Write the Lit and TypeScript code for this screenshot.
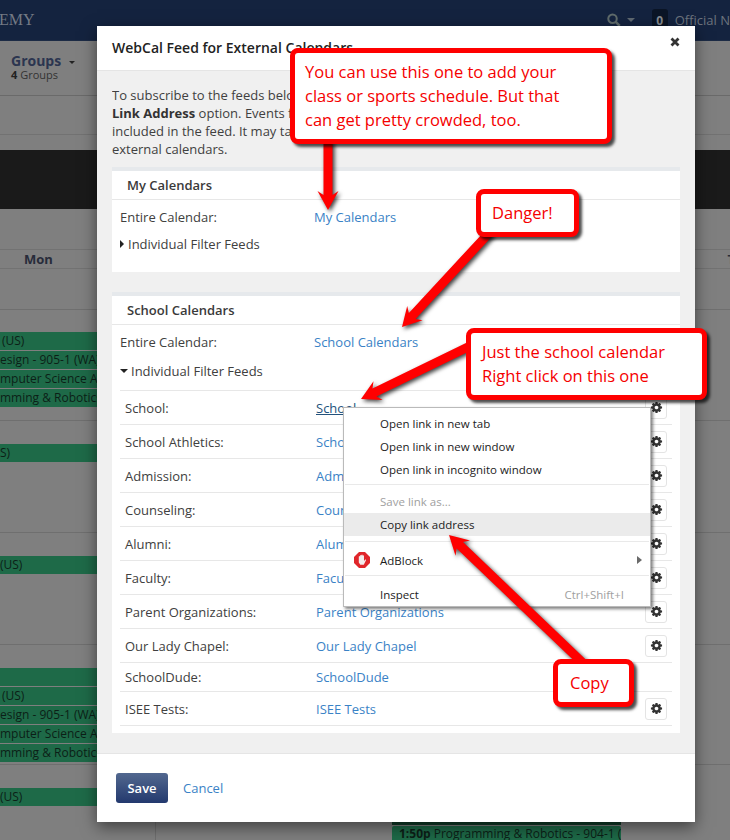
import { LitElement, html, css, svg } from "lit";
import { customElement } from "lit/decorators.js";

const COG = "M1152 896q0-106-75-181t-181-75-181 75-75 181 75 181 181 75 181-75 75-181zm512-109v222q0 12-8 23t-20 13l-185 28q-19 54-39 91 35 50 107 138 10 12 10 25t-9 23q-27 37-99 108t-94 71q-12 0-26-9l-138-108q-44 23-91 38-16 136-29 186-7 28-36 28h-222q-14 0-24.500-8.500t-11.500-21.500l-28-184q-49-16-90-37l-141 107q-10 9-25 9-14 0-25-11-126-114-165-168-7-10-7-23 0-12 8-23 15-21 51-66.500t54-70.500q-27-50-41-99l-183-27q-13-2-21-12.500t-8-23.500v-222q0-12 8-23t19-13l186-28q14-46 39-92-40-57-107-138-10-12-10-24 0-10 9-23 26-36 98.500-107.500t94.500-71.500q13 0 26 10l138 107q44-23 91-38 16-136 29-186 7-28 36-28h222q14 0 24.500 8.500t11.500 21.500l28 184q49 16 90 37l142-107q9-9 24-9 13 0 25 10 129 119 165 170 7 8 7 22 0 12-8 23-15 21-51 66.500t-54 70.500q26 50 41 98l183 28q13 2 21 12.500t8 23.500z";

type Row = { label: string; link: string; gear: boolean; short?: boolean; active?: boolean };
const rows: Row[] = [
  { label: "School:", link: "School", gear: true, active: true },
  { label: "School Athletics:", link: "School Athletics", gear: true },
  { label: "Admission:", link: "Admission", gear: true },
  { label: "Counseling:", link: "Counseling", gear: true },
  { label: "Alumni:", link: "Alumni", gear: true },
  { label: "Faculty:", link: "Faculty", gear: true },
  { label: "Parent Organizations:", link: "Parent Organizations", gear: true },
  { label: "Our Lady Chapel:", link: "Our Lady Chapel", gear: true },
  { label: "SchoolDude:", link: "SchoolDude", gear: false, short: true },
  { label: "ISEE Tests:", link: "ISEE Tests", gear: true },
];

// Backdrop rows: [gap above, kind, text]
type Bg = { gap: number; kind: "line" | "event"; text?: string; pad?: number };
const bgRows: Bg[] = [
  { gap: 40, kind: "line" },
  { gap: 22, kind: "event", text: "(US)", pad: 2 },
  { gap: 1, kind: "event", text: "esign - 905-1 (WA)", pad: 0 },
  { gap: 1, kind: "event", text: "mputer Science A -", pad: 0 },
  { gap: 1, kind: "event", text: "mming & Robotics -", pad: 0 },
  { gap: 13, kind: "line" },
  { gap: 23, kind: "event", text: "S)", pad: 0 },
  { gap: 70, kind: "line" },
  { gap: 23, kind: "event", text: "(US)", pad: 0 },
  { gap: 70, kind: "line" },
  { gap: 23, kind: "event", text: "", pad: 0 },
  { gap: 1, kind: "event", text: "(US)", pad: 2 },
  { gap: 1, kind: "event", text: "esign - 905-1 (WA)", pad: 0 },
  { gap: 1, kind: "event", text: "mputer Science A -", pad: 0 },
  { gap: 1, kind: "event", text: "mming & Robotics -", pad: 0 },
  { gap: 2, kind: "line" },
  { gap: 23, kind: "event", text: "(US)", pad: 0 },
];

function arrow(sx: number, sy: number, tx: number, ty: number, shaft = 9, head = 21, len = 19, notch = 4) {
  const dx = tx - sx, dy = ty - sy;
  const d = Math.hypot(dx, dy);
  const ux = dx / d, uy = dy / d, nx = -uy, ny = ux;
  const pt = (along: number, off: number) =>
    `${(tx - ux * along + nx * off).toFixed(1)},${(ty - uy * along + ny * off).toFixed(1)}`;
  return [
    pt(d, shaft / 2), pt(len - notch, shaft / 2), pt(len, head / 2), pt(0, 0),
    pt(len, -head / 2), pt(len - notch, -shaft / 2), pt(d, -shaft / 2),
  ].join(" ");
}

@customElement("app-root")
export class AppRoot extends LitElement {
  static styles = css`
    :host { display: block; }
    * { box-sizing: border-box; }
    .page {
      position: relative; width: 730px; height: 840px; overflow: hidden;
      background: #7f7f7f; font-family: "Open Sans", sans-serif; font-size: 13px; color: #404040;
    }
    .nav { height: 41px; background: #14233f; border-bottom: 1px solid #1c2b45; display: flex; align-items: center; }
    .logo { font-family: "Liberation Serif", serif; font-size: 16px; color: #737a84; margin-left: -1px; letter-spacing: 0; }
    .nav-right { margin-left: auto; display: flex; align-items: center; width: 123px; flex: none; }
    .caret-nav { width: 0; height: 0; border: 4px solid transparent; border-top-color: #5f6871; border-bottom: 0; margin-left: 6px; }
    .badge { margin-left: 17px; width: 19px; height: 22px; background: #0b1526; border-radius: 3px; color: #868b91; font-weight: 700; font-size: 12px; display: flex; align-items: center; justify-content: center; }
    .official { margin-left: 7px; color: #6c737d; font-size: 13px; white-space: nowrap; }
    .subbar { height: 55px; display: flex; flex-direction: column; padding: 12px 0 0 11px; border-bottom: 1px solid #6a6a6a; position: relative; }
    .groups { font-size: 14px; font-weight: 700; color: #2b3550; line-height: 16px; display: flex; align-items: center; gap: 8px; }
    .groups i { width: 0; height: 0; border: 3.5px solid transparent; border-top-color: #222; border-bottom: 0; margin-top: 2px; }
    .groups-sub { font-size: 11px; line-height: 11px; color: #333; }
    .groups-sub b { color: #222; }
    .bar2 { height: 39px; border-bottom: 1px solid #727272; }
    .band { margin-top: 15px; height: 59px; background: #1a1a1a; }
    .days { margin-top: 40px; height: 20px; border-top: 1px solid #727272; border-bottom: 1px solid #727272; position: relative; text-align: center; width: 730px; }
    .mon { position: absolute; left: 24px; top: 0; font-weight: 700; font-size: 13px; color: #272c3a; line-height: 18px; }
    .tue { position: absolute; right: -5px; top: 0; font-weight: 700; font-size: 13px; color: #272c3a; line-height: 18px; }
    .line { height: 1px; background: #6f6f6f; }
    .event { height: 18px; width: 97px; background: #1e6a48; color: #0c1f17; font-size: 12px; line-height: 17px; white-space: nowrap; overflow: hidden; }
    .late { position: absolute; left: 392px; top: 822px; width: 229px; height: 18px; display: flex; flex-direction: column; }
    .late i { display: block; height: 3px; background: #123d2a; }
    .late div { height: 15px; margin-top: 1px; background: #1e6a48; color: #0c1f17; font-size: 12px; line-height: 15px; padding-left: 7px; white-space: nowrap; overflow: hidden; border-radius: 2px 2px 0 0; }
    .vline { position: absolute; left: 155px; top: 780px; width: 1px; height: 60px; background: #6f6f6f; }
    .bg-col { display: flex; flex-direction: column; }

    .modal { position: absolute; left: 97px; top: 26px; width: 598px; height: 796px; background: #fff; box-shadow: 0 5px 15px rgba(0,0,0,.5); display: flex; flex-direction: column; }
    .head { height: 45px; flex: none; border-bottom: 1px solid #e5e5e5; padding: 0 15px; display: flex; align-items: center; justify-content: space-between; }
    .title { font-size: 14px; font-weight: 600; color: #222; white-space: nowrap; position: relative; top: -.5px; }
    .close { width: 10px; height: 10px; display: block; position: relative; top: -6px; margin-right: 0; }
    .body { flex: 1; background: #f0f0f0; padding: 15px 15px 0; }
    .intro { margin: 0 0 9px; line-height: 18px; white-space: nowrap; overflow: hidden; height: 72px; color: #404040; }
    .intro b { font-weight: 700; color: #333; }
    .section { background: #fff; border-top: 4px solid #e6e9ec; }
    .section + .section { margin-top: 20px; }
    .one { height: 105px; }
    .two { height: 441px; }
    .sec-head { height: 29px; border-bottom: 1px solid #e7e7e7; padding-left: 15px; font-weight: 600; line-height: 28px; color: #3a3a3a; }
    .entire { height: 32px; padding: 1px 8px 0; display: flex; align-items: center; }
    .entire span { width: 194px; flex: none; }
    a { color: #3a82c6; text-decoration: none; }
    .filter { height: 24px; padding-left: 8px; display: flex; align-items: center; gap: 4px; }
    .two .filter { gap: 3px; height: 32px; margin-top: 0; padding-bottom: 4px; }
    .feeds { margin: 1px 8px 0; border-top: 1px solid #e7e7e7; }
    .feed { height: 34px; border-bottom: 1px solid #e7e7e7; display: flex; align-items: center; padding: 0 5px; }
    .feed.short { height: 29px; }
    .feed > span { width: 191px; flex: none; }
    .feed > a { flex: 1; }
    a.active { color: #23527c; text-decoration: underline; }
    .gear { width: 22px; height: 22px; flex: none; border: 1px solid #e4e4e4; border-radius: 3px; background: #fff; display: flex; align-items: center; justify-content: center; padding: 0; margin-right: 0; }
    .gear svg { width: 13px; height: 13px; fill: #333; display: block; }
    .foot { height: 69px; flex: none; border-top: 1px solid #e5e5e5; padding: 19px 19px 0; display: flex; align-items: flex-start; gap: 15px; }
    .save { width: 52px; height: 30px; border: 0; border-radius: 3px; background: linear-gradient(#52688f, #23396e); color: #fff; font: 600 13px "Open Sans", sans-serif; padding: 0; }
    .cancel { line-height: 30px; }

    .menu { position: absolute; left: 343px; top: 407px; width: 308px; height: 200px; background: #fff; border: 1px solid #bababa; box-shadow: 2px 2px 3px rgba(0,0,0,.5); padding-top: 4px; font-size: 11.5px; color: #1c1c1c; }
    .mi { height: 23px; padding-left: 36px; padding-right: 26px; display: flex; align-items: center; justify-content: space-between; position: relative; }
    .mi.off, .mi small { color: #a0a0a0; }
    .mi small { font-size: 11.5px; }
    .mi.hot { background: #ebebeb; }
    .sep { height: 1px; background: #e9e9e9; margin: 3px 1px 5px; }
    .sep.wide { margin: 5px 1px 7px; }
    .sep.last { margin: 3px 1px 7px; }
    .ab { position: absolute; left: 10px; top: 3px; width: 16px; height: 16px; }
    .sub { position: absolute; right: 8px; top: 7px; width: 0; height: 0; border-left: 5px solid #6a6a6a; border-top: 4px solid transparent; border-bottom: 4px solid transparent; }

    .arrows { position: absolute; left: 0; top: 0; width: 730px; height: 840px; pointer-events: none; filter: drop-shadow(2px 2px 2px rgba(0,0,0,.75)); }
    .arrows polygon { fill: #ff0000; }
    .callout { position: absolute; background: #fff; border: 5px solid #ff0000; border-radius: 8px; box-shadow: 3px 3px 3px rgba(0,0,0,.7); color: #f50000; font-family: "Open Sans", sans-serif; font-size: 16.5px; line-height: 24px; white-space: nowrap; padding-left: 10px; display: flex; flex-direction: column; justify-content: center; }
    .c1 { left: 290px; top: 48px; width: 322px; height: 96px; }
    .c2 { left: 476px; top: 189px; width: 103px; height: 48px; padding-left: 11px; }
    .c3 { left: 466px; top: 328px; width: 241px; height: 72px; padding-left: 11px; }
    .c4 { left: 553px; top: 659px; width: 81px; height: 48px; padding-left: 12px; }
  `;

  render() {
    return html`
      <div class="page">
        <div class="nav">
          <span class="logo">EMY</span>
          <div class="nav-right">
            <svg width="16" height="16" viewBox="0 0 16 16"><circle cx="6.5" cy="6.5" r="5" fill="none" stroke="#5f6b6b" stroke-width="2.4"/><path d="M10 10l5 5" stroke="#5f6b6b" stroke-width="3"/></svg>
            <i class="caret-nav"></i>
            <span class="badge">0</span>
            <span class="official">Official N</span>
          </div>
        </div>
        <div class="subbar">
          <div class="groups">Groups <i></i></div>
          <div class="groups-sub"><b>4</b> Groups</div>
        </div>
        <div class="bar2"></div>
        <div class="band"></div>
        <div class="days"><span class="mon">Mon</span><span class="tue">T</span></div>
        <div class="bg-col">
          ${bgRows.map(r => html`
            <div style="height:${r.gap}px"></div>
            ${r.kind === "line"
              ? html`<div class="line"></div>`
              : html`<div class="event" style="padding-left:${r.pad}px">${r.text}</div>`}
          `)}
        </div>
        <div class="vline"></div>
        <div class="late"><i></i><div><b>1:50p</b> Programming &amp; Robotics - 904-1 (WD</div></div>

        <div class="modal">
          <div class="head">
            <div class="title">WebCal Feed for External Calendars</div>
            <svg class="close" viewBox="0 0 10 10"><path d="M1.500 1.500l7 7M8.500 1.500l-7 7" stroke="#333" stroke-width="2.800"/></svg>
          </div>
          <div class="body">
            <p class="intro">To subscribe to the feeds below, right click on the link and choose the <b>Copy</b><br>
            <b>Link Address</b> option. Events from the calendars you select here will be<br>
            included in the feed. It may take some time for them to be displayed in your<br>
            external calendars.</p>
            <div class="section one">
              <div class="sec-head">My Calendars</div>
              <div class="entire"><span>Entire Calendar:</span><a>My Calendars</a></div>
              <div class="filter"><svg width="4" height="8" viewBox="0 0 4 8"><path d="M0 0l4 4-4 4z" fill="#222"/></svg>Individual Filter Feeds</div>
            </div>
            <div class="section two">
              <div class="sec-head">School Calendars</div>
              <div class="entire"><span>Entire Calendar:</span><a>School Calendars</a></div>
              <div class="filter"><svg width="8" height="4" viewBox="0 0 8 4"><path d="M0 0h8l-4 4z" fill="#222"/></svg>Individual Filter Feeds</div>
              <div class="feeds">
                ${rows.map(r => html`
                  <div class="feed ${r.short ? "short" : ""}">
                    <span>${r.label}</span>
                    <a class="${r.active ? "active" : ""}">${r.link}</a>
                    ${r.gear ? html`<button class="gear"><svg viewBox="0 0 1792 1792"><path d="${COG}"/></svg></button>` : ""}
                  </div>`)}
              </div>
            </div>
          </div>
          <div class="foot">
            <button class="save">Save</button>
            <a class="cancel">Cancel</a>
          </div>
        </div>

        <div class="menu">
          <div class="mi">Open link in new tab</div>
          <div class="mi">Open link in new window</div>
          <div class="mi">Open link in incognito window</div>
          <div class="sep"></div>
          <div class="mi off">Save link as...</div>
          <div class="mi hot">Copy link address</div>
          <div class="sep wide"></div>
          <div class="mi">
            <svg class="ab" viewBox="0 0 16 16">
              <path d="M5 0h6l5 5v6l-5 5H5l-5-5V5z" fill="#e0262b"/>
              <path d="M4.800 8V4.500a.7.7 0 0 1 1.300 0V3.500a.7.7 0 0 1 1.300 0V3a.7.7 0 0 1 1.300 0v.7a.7.7 0 0 1 1.300 0V9l1-1.200c.6-.5 1.300 0 .9.700L9.800 12.800H6.300L4.800 10.500z" fill="#f3ecec"/>
            </svg>
            AdBlock<i class="sub"></i>
          </div>
          <div class="sep last"></div>
          <div class="mi">Inspect<small>Ctrl+Shift+I</small></div>
        </div>

        <svg class="arrows" viewBox="0 0 730 840">
          ${svg`<polygon points="${arrow(328, 140, 328, 210)}"/>`}
          ${svg`<polygon points="${arrow(490, 232, 402, 327)}"/>`}
          ${svg`<polygon points="${arrow(470, 346, 361, 399)}"/>`}
          ${svg`<polygon points="${arrow(584, 664, 449, 535)}"/>`}
        </svg>

        <div class="callout c1"><div>You can use this one to add your</div><div>class or sports schedule. But that</div><div>can get pretty crowded, too.</div></div>
        <div class="callout c2"><div>Danger!</div></div>
        <div class="callout c3"><div>Just the school calendar</div><div>Right click on this one</div></div>
        <div class="callout c4"><div>Copy</div></div>
      </div>
    `;
  }
}
